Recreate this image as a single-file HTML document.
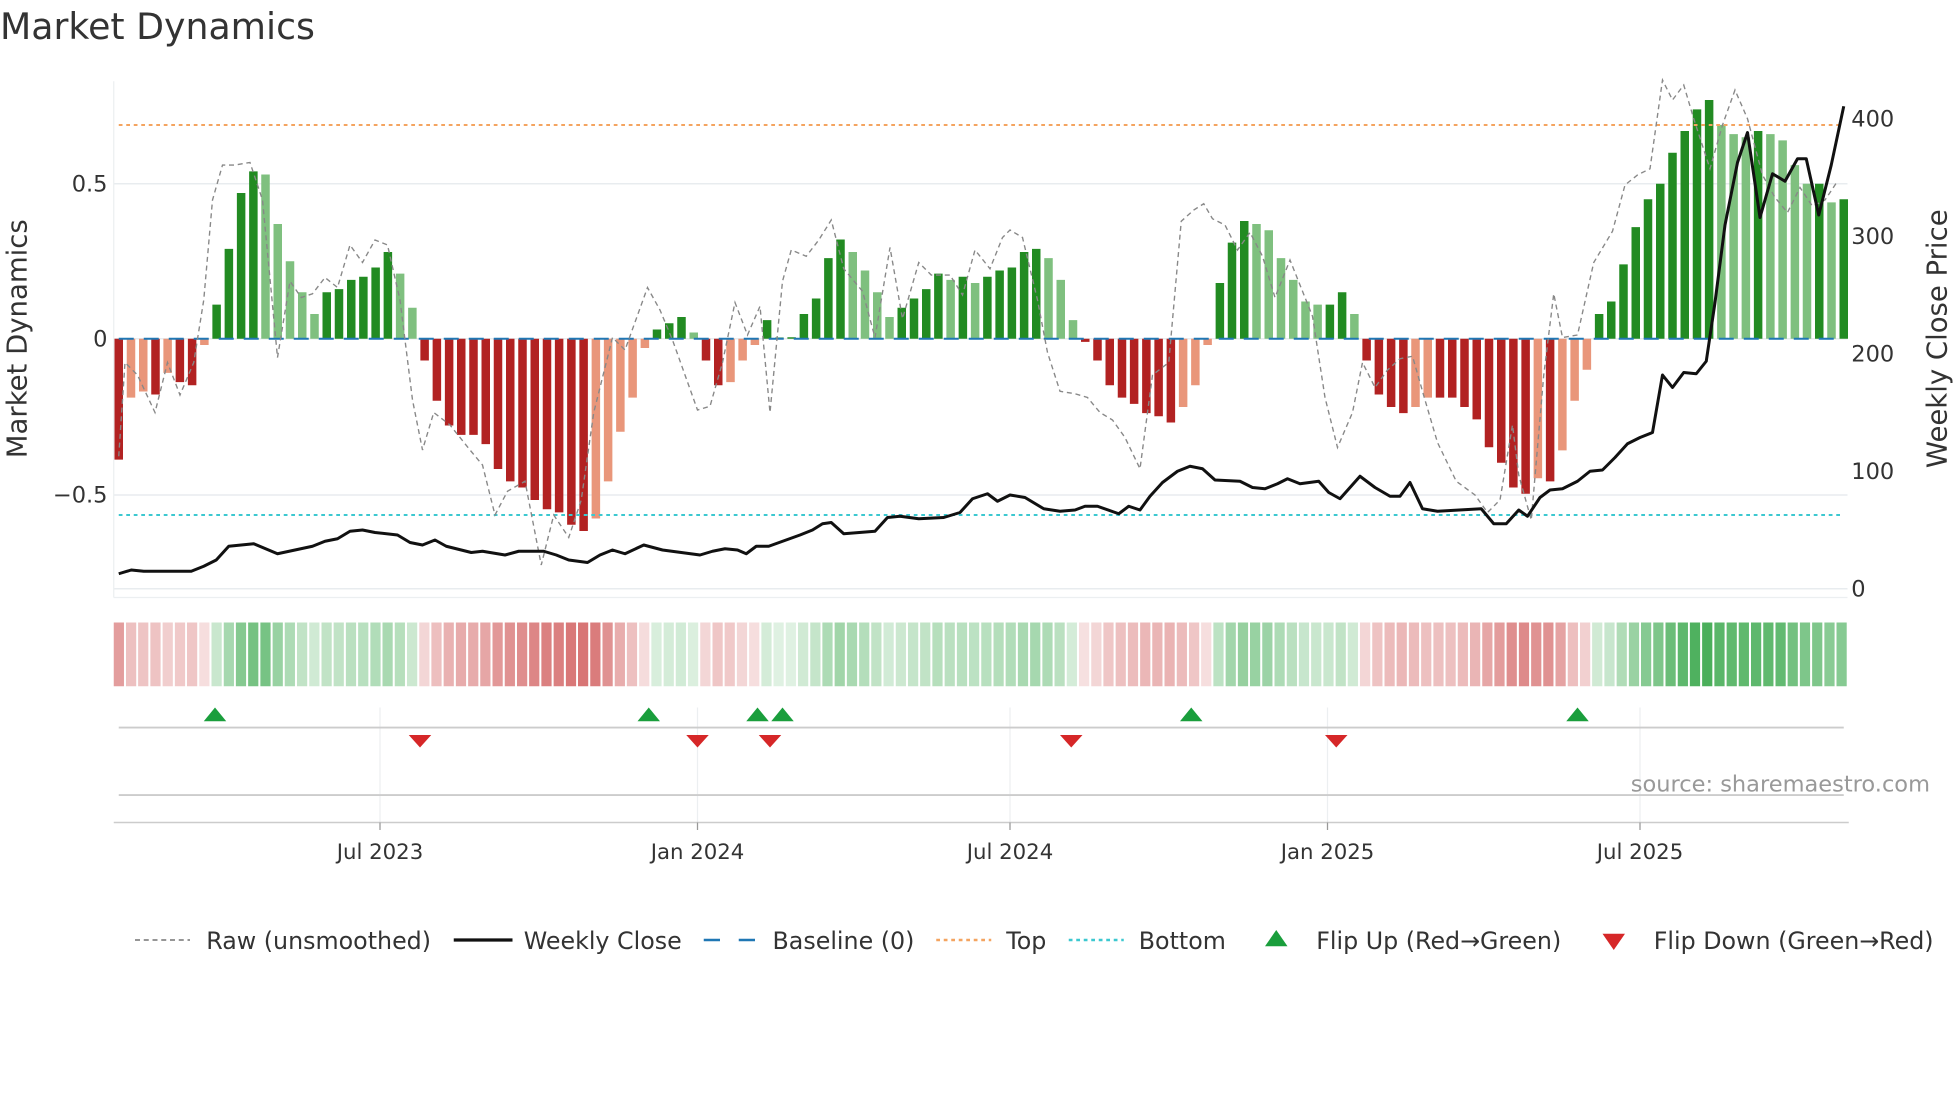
<!DOCTYPE html>
<html><head><meta charset="utf-8"><style>
html,body{margin:0;padding:0;background:#fff;width:1960px;height:1102px;overflow:hidden}
svg{display:block}
text{font-family:"DejaVu Sans","Liberation Sans",sans-serif}
</style></head><body>
<svg id="s" width="1960" height="1102" viewBox="0 0 1568 881.6" preserveAspectRatio="none" xmlns="http://www.w3.org/2000/svg">
<text x="0" y="31" font-size="29" fill="#333">Market Dynamics</text>
<g id="g"></g>
</svg>
<script>
const V=[-0.39,-0.19,-0.17,-0.18,-0.11,-0.14,-0.15,-0.02,0.11,0.29,0.47,0.54,0.53,0.37,0.25,0.15,0.08,0.15,0.16,0.19,0.20,0.23,0.28,0.21,0.10,-0.07,-0.20,-0.28,-0.31,-0.31,-0.34,-0.42,-0.46,-0.48,-0.52,-0.55,-0.56,-0.60,-0.62,-0.58,-0.46,-0.30,-0.19,-0.03,0.03,0.05,0.07,0.02,-0.07,-0.15,-0.14,-0.07,-0.02,0.06,0.005,0.005,0.08,0.13,0.26,0.32,0.28,0.22,0.15,0.07,0.10,0.13,0.16,0.21,0.19,0.20,0.18,0.20,0.22,0.23,0.28,0.29,0.26,0.19,0.06,-0.01,-0.07,-0.15,-0.19,-0.21,-0.24,-0.25,-0.27,-0.22,-0.15,-0.02,0.18,0.31,0.38,0.37,0.35,0.26,0.19,0.12,0.11,0.11,0.15,0.08,-0.07,-0.18,-0.22,-0.24,-0.22,-0.19,-0.19,-0.19,-0.22,-0.26,-0.35,-0.40,-0.48,-0.50,-0.45,-0.46,-0.36,-0.20,-0.10,0.08,0.12,0.24,0.36,0.45,0.50,0.60,0.67,0.74,0.77,0.69,0.66,0.65,0.67,0.66,0.64,0.56,0.50,0.50,0.44,0.45];
const N=V.length, x0=95, dx=(1475-95)/(N-1), y0=271, k=248;
let h='';
[147,271,396,471].forEach(y=>h+=`<line x1="91" x2="1478" y1="${y}" y2="${y}" stroke="#e8ecef" stroke-width="1.2"/>`);
h+=`<line x1="91" x2="91" y1="65" y2="478" stroke="#eceff1"/>`;
h+=`<line x1="91" x2="1478" y1="478" y2="478" stroke="#eceff1"/>`;
for(let i=0;i<N;i++){const v=V[i],p=i?V[i-1]:0;const dark=(Math.sign(v)!==Math.sign(p))||Math.abs(v)>=Math.abs(p);
let c=v>=0?(dark?'#228b22':'#7fc07f'):(dark?'#b22222':'#e9967a');
const x=x0+i*dx-3.4,y=v>=0?y0-v*k:y0,hh=Math.abs(v)*k;
h+=`<rect x="${x.toFixed(1)}" y="${y.toFixed(1)}" width="6.8" height="${hh.toFixed(1)}" fill="${c}"/>`;}
h+=`<line x1="95" x2="1475" y1="100" y2="100" stroke="#f4a460" stroke-width="1.6" stroke-dasharray="3,3"/>`;
h+=`<line x1="95" x2="1475" y1="412" y2="412" stroke="#3cc8d0" stroke-width="1.6" stroke-dasharray="3,3"/>`;
h+=`<line x1="95" x2="1475" y1="271" y2="271" stroke="#1f77b4" stroke-width="1.6" stroke-dasharray="12,8"/>`;
const raw="95,365 100,290 110,300 124,330 134,290 144,316 155,290 163,240 170,160 178,132 188,132 200,130 210,160 222,286 232,225 241,238 250,235 260,222 270,230 280,196 290,210 300,192 310,196 320,240 330,320 338,360 347,330 360,340 376,360 386,372 396,412 406,393 420,385 433,452 443,412 455,430 465,400 475,330 490,270 500,280 518,230 528,248 538,272 548,300 558,328 568,325 578,290 588,242 598,268 608,245 616,330 626,225 633,200 645,205 655,192 665,176 675,215 690,233 700,270 712,198 722,255 735,210 745,220 760,220 770,236 780,200 792,215 802,190 808,184 818,190 830,240 838,282 848,313 860,315 870,318 880,330 890,336 900,350 912,375 922,300 935,290 945,177 955,168 963,163 970,175 980,180 990,200 1000,186 1010,205 1020,238 1032,208 1040,228 1050,253 1060,318 1070,358 1082,330 1090,290 1100,310 1110,296 1120,287 1130,285 1140,320 1150,354 1165,385 1180,396 1190,410 1200,400 1210,340 1215,380 1225,416 1235,300 1243,235 1250,270 1262,268 1275,210 1290,185 1300,148 1310,140 1320,135 1330,64 1338,80 1347,68 1355,95 1368,135 1378,100 1388,72 1398,95 1410,140 1420,158 1430,170 1440,150 1450,165 1460,160 1470,145";
h+=`<polyline points="${raw}" fill="none" stroke="#888" stroke-width="1.1" stroke-dasharray="4,3"/>`;
const pr="95,459 105,456 115,457 153,457 163,453 173,448 183,437 203,435 222,443 250,437 260,433 270,431 280,425 290,424 300,426 318,428 328,434 338,436 348,432 357,437 377,442 386,441 404,444 415,441 435,441 445,444 455,448 470,450 480,444 490,440 500,443 515,436 530,440 545,442 560,444 570,441 580,439 590,440 597,443 605,437 615,437 640,428 650,424 658,419 665,418 675,427 700,425 710,414 720,413 735,415 755,414 768,410 778,399 790,395 798,401 808,396 820,398 835,407 848,409 860,408 868,405 878,405 895,411 903,405 912,408 920,397 930,386 942,377 952,373 962,375 972,384 992,385 1002,390 1012,391 1022,387 1030,383 1040,387 1055,385 1063,394 1072,399 1080,390 1088,381 1100,390 1112,397 1120,397 1128,386 1138,407 1150,409 1185,407 1195,419 1205,419 1215,408 1222,413 1232,398 1240,392 1250,391 1262,385 1272,377 1282,376 1292,366 1302,355 1312,350 1322,346 1330,300 1338,310 1347,298 1357,299 1365,289 1372,242 1380,180 1390,130 1398,106 1408,174 1418,139 1428,145 1438,127 1445,127 1455,172 1465,132 1475,85";
h+=`<polyline points="${pr}" fill="none" stroke="#111" stroke-width="2.4" stroke-linejoin="round"/>`;
[[153,'0.5'],[277,'0'],[402,'−0.5']].forEach(([y,t])=>h+=`<text x="86" y="${y}" font-size="18" fill="#333" text-anchor="end">${t}</text>`);
[[101,'400'],[195,'300'],[289,'200'],[383,'100'],[477,'0']].forEach(([y,t])=>h+=`<text x="1481" y="${y}" font-size="18" fill="#333">${t}</text>`);
h+=`<text transform="translate(21,271) rotate(-90)" font-size="22" fill="#333" text-anchor="middle">Market Dynamics</text>`;
h+=`<text transform="translate(1557,271) rotate(-90)" font-size="22" fill="#333" text-anchor="middle">Weekly Close Price</text>`;
for(let i=0;i<N;i++){const v=V[i],a=Math.min(0.85,0.15+Math.abs(v)*0.9);
const c=v>=0?`rgba(40,160,60,${a.toFixed(2)})`:`rgba(200,60,60,${a.toFixed(2)})`;
const x=91+i*(1479-91)/N;h+=`<rect x="${x.toFixed(1)}" y="498" width="${((1479-91)/N-1.6).toFixed(2)}" height="51" fill="${c}"/>`;}
[304,558,808,1062,1312].forEach(x=>h+=`<line x1="${x}" x2="${x}" y1="566" y2="662" stroke="#eceff1"/>`);
h+=`<line x1="95" x2="1475" y1="582" y2="582" stroke="#ccc" stroke-width="1.5"/>`;
h+=`<line x1="95" x2="1475" y1="636" y2="636" stroke="#ccc" stroke-width="1.5"/>`;
h+=`<line x1="91" x2="1479" y1="658" y2="658" stroke="#ccc" stroke-width="1.2"/>`;
[172,519,606,626,953,1262].forEach(x=>h+=`<polygon points="${x-9},577 ${x+9},577 ${x},566" fill="#1a9e3c"/>`);
[336,558,616,857,1069].forEach(x=>h+=`<polygon points="${x-9},588 ${x+9},588 ${x},598" fill="#d62728"/>`);
[[304,'Jul 2023'],[558,'Jan 2024'],[808,'Jul 2024'],[1062,'Jan 2025'],[1312,'Jul 2025']].forEach(([x,t])=>{h+=`<line x1="${x}" x2="${x}" y1="658" y2="664" stroke="#999"/><text x="${x}" y="687" font-size="17" fill="#333" text-anchor="middle">${t}</text>`});
h+=`<text x="1544" y="633" font-size="18" fill="#999" text-anchor="end">source: sharemaestro.com</text>`;
const ly=752;
h+=`<line x1="108" x2="152" y1="${ly}" y2="${ly}" stroke="#888" stroke-width="1.4" stroke-dasharray="4,3"/><text x="165" y="${ly+7}" font-size="19" fill="#333">Raw (unsmoothed)</text>`;
h+=`<line x1="363" x2="410" y1="${ly}" y2="${ly}" stroke="#111" stroke-width="2.6"/><text x="419" y="${ly+7}" font-size="19" fill="#333">Weekly Close</text>`;
h+=`<line x1="563" x2="606" y1="${ly}" y2="${ly}" stroke="#1f77b4" stroke-width="2" stroke-dasharray="13,15"/><text x="618" y="${ly+7}" font-size="19" fill="#333">Baseline (0)</text>`;
h+=`<line x1="749" x2="793" y1="${ly}" y2="${ly}" stroke="#f4a460" stroke-width="2" stroke-dasharray="3,3"/><text x="805" y="${ly+7}" font-size="19" fill="#333">Top</text>`;
h+=`<line x1="855" x2="899" y1="${ly}" y2="${ly}" stroke="#3cc8d0" stroke-width="2" stroke-dasharray="3,3"/><text x="911" y="${ly+7}" font-size="19" fill="#333">Bottom</text>`;
h+=`<polygon points="1012,757 1030,757 1021,744" fill="#1a9e3c"/><text x="1053" y="${ly+7}" font-size="19" fill="#333">Flip Up (Red→Green)</text>`;
h+=`<polygon points="1282,747 1300,747 1291,760" fill="#d62728"/><text x="1323" y="${ly+7}" font-size="19" fill="#333">Flip Down (Green→Red)</text>`;
document.getElementById('g').innerHTML=h;
</script>
</body></html>
